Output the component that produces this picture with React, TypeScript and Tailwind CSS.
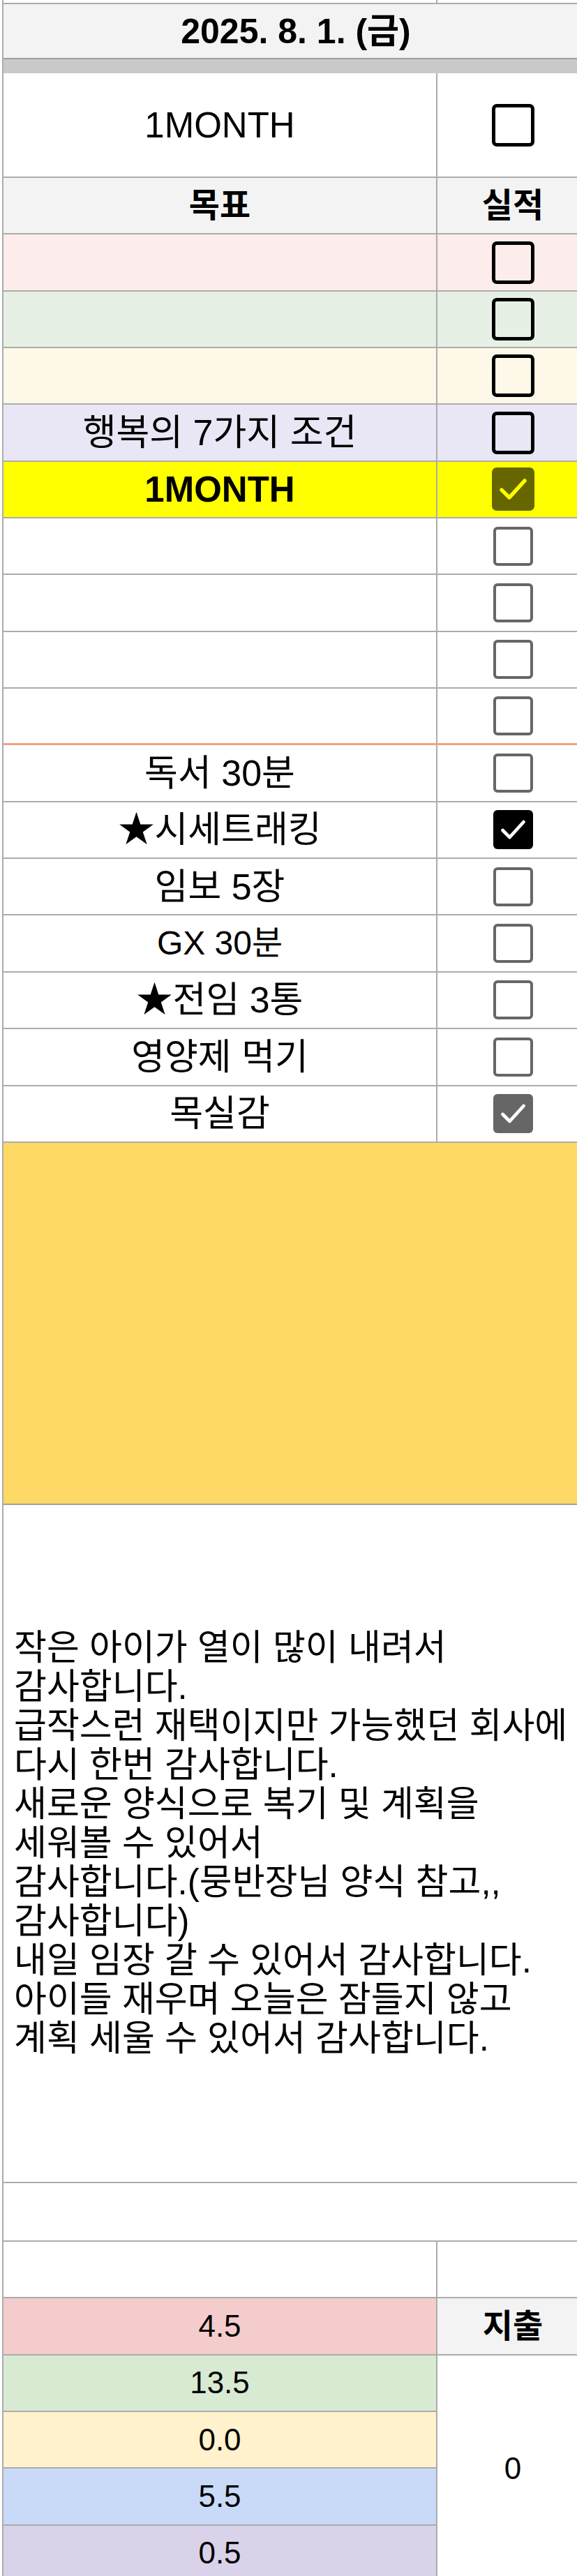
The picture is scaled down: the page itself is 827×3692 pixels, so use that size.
import React from "react";

type BoxKind = "black" | "gray" | "yellowChecked" | "blackChecked" | "grayChecked";

function Check({ color }: { color: string }) {
  return (
    <svg viewBox="0 0 24 24" className="w-full h-full" fill="none">
      <polyline
        points="4.5,12.5 9.5,17.5 19.5,6.5"
        stroke={color}
        strokeWidth="2.4"
        strokeLinecap="round"
        strokeLinejoin="round"
      />
    </svg>
  );
}

function Box({ kind }: { kind: BoxKind }) {
  if (kind === "black") {
    return <div className="w-[61px] h-[61px] border-[5px] border-black rounded-[7px] bg-transparent" />;
  }
  if (kind === "gray") {
    return <div className="w-[57px] h-[56px] border-[4px] border-[#666666] rounded-[6px] bg-transparent" />;
  }
  if (kind === "yellowChecked") {
    return (
      <div className="w-[61px] h-[62px] rounded-[7px] bg-[#666600] p-[4px]">
        <Check color="#ffff00" />
      </div>
    );
  }
  if (kind === "blackChecked") {
    return (
      <div className="w-[57px] h-[56px] rounded-[6px] bg-black p-[4px]">
        <Check color="#ffffff" />
      </div>
    );
  }
  return (
    <div className="w-[57px] h-[56px] rounded-[6px] bg-[#666666] p-[4px]">
      <Check color="#ffffff" />
    </div>
  );
}

function Row({
  bg,
  label,
  labelClass,
  box,
  border,
}: {
  bg: string;
  label?: React.ReactNode;
  labelClass?: string;
  box?: BoxKind;
  border?: string;
}) {
  return (
    <div className={`flex h-[81.35px] ${border ?? "border-b-2 border-[#acacac]"} ${bg}`}>
      <div className={`w-[620px] flex items-center justify-center whitespace-nowrap leading-none ${labelClass ?? "text-[52px]"}`}>
        {label}
      </div>
      <div className="w-[218px] border-l-2 border-[#acacac] flex items-center justify-center">
        {box ? <Box kind={box} /> : null}
      </div>
    </div>
  );
}

const gratitude = [
  "작은 아이가 열이 많이 내려서",
  "감사합니다.",
  "급작스런 재택이지만 가능했던 회사에",
  "다시 한번 감사합니다.",
  "새로운 양식으로 복기 및 계획을",
  "세워볼 수 있어서",
  "감사합니다.(뭉반장님 양식 참고,,",
  "감사합니다)",
  "내일 임장 갈 수 있어서 감사합니다.",
  "아이들 재우며 오늘은 잠들지 않고",
  "계획 세울 수 있어서 감사합니다.",
];

export default function App() {
  return (
    <div className="w-[827px] h-[3692px] overflow-hidden bg-white text-black [font-family:'Liberation_Sans','Noto_Sans_CJK_KR',sans-serif]">
      <div className="ml-[3px] w-[840px] border-l-2 border-[#acacac]">
        {/* sliver of previous row */}
        <div className="flex h-[6px] border-b-2 border-[#acacac]">
          <div className="w-[620px]" />
          <div className="w-[218px] border-l-2 border-[#acacac]" />
        </div>

        {/* date header */}
        <div className="h-[79px] border-b-2 border-[#9f9f9f] bg-[#f3f3f3] flex items-center justify-center">
          <span className="text-[50px] font-bold leading-none whitespace-nowrap">2025. 8. 1. (금)</span>
        </div>

        {/* frozen divider band */}
        <div className="h-[20px] bg-[#c9c9c9]" />

        {/* 1MONTH row */}
        <div className="flex h-[150px] border-b-2 border-[#acacac] bg-white">
          <div className="w-[620px] flex items-center justify-center text-[51px] leading-none">1MONTH</div>
          <div className="w-[218px] border-l-2 border-[#acacac] flex items-center justify-center">
            <Box kind="black" />
          </div>
        </div>

        {/* header */}
        <div className="flex h-[81.35px] border-b-2 border-[#acacac] bg-[#f3f3f3]">
          <div className="w-[620px] flex items-center justify-center text-[48px] font-bold leading-none">목표</div>
          <div className="w-[218px] border-l-2 border-[#acacac] flex items-center justify-center text-[48px] font-bold leading-none">
            실적
          </div>
        </div>

        <Row bg="bg-[#fdecec]" box="black" />
        <Row bg="bg-[#e7f0e4]" box="black" />
        <Row bg="bg-[#fef8e9]" box="black" />
        <Row bg="bg-[#e9e7f6]" label="행복의 7가지 조건" box="black" />
        <Row bg="bg-[#ffff00]" label="1MONTH" labelClass="text-[51px] font-bold" box="yellowChecked" />
        <Row bg="bg-white" box="gray" />
        <Row bg="bg-white" box="gray" />
        <Row bg="bg-white" box="gray" />
        <Row bg="bg-white" box="gray" border="border-b-[3px] border-[#f2a27e]" />
        <Row bg="bg-white" label="독서 30분" box="gray" />
        <Row bg="bg-white" label="★시세트래킹" box="blackChecked" />
        <Row bg="bg-white" label="임보 5장" box="gray" />
        <Row bg="bg-white" label="GX 30분" labelClass="text-[48px]" box="gray" />
        <Row bg="bg-white" label="★전임 3통" box="gray" />
        <Row bg="bg-white" label="영양제 먹기" box="gray" />
        <Row bg="bg-white" label="목실감" box="grayChecked" />

        {/* yellow merged block */}
        <div className="h-[519px] bg-[#ffd966] border-b-2 border-[#9f9f9f]" />

        {/* gratitude text block */}
        <div className="h-[972px] border-b-2 border-[#acacac] flex flex-col justify-center pl-[15px]">
          {gratitude.map((line, i) => (
            <div key={i} className="text-[51px] leading-[56px] whitespace-nowrap">
              {line}
            </div>
          ))}
        </div>

        {/* empty merged row */}
        <div className="h-[84px] border-b-2 border-[#acacac]" />

        {/* empty two-col row */}
        <div className="flex h-[81.35px] border-b-2 border-[#acacac]">
          <div className="w-[620px]" />
          <div className="w-[218px] border-l-2 border-[#acacac]" />
        </div>

        {/* bottom summary */}
        <div className="flex">
          <div className="w-[620px] flex flex-col">
            <div className="h-[81.35px] border-b-2 border-[#acacac] bg-[#f4cccc] flex items-center justify-center text-[44px] leading-none">4.5</div>
            <div className="h-[81.35px] border-b-2 border-[#acacac] bg-[#d9ead3] flex items-center justify-center text-[44px] leading-none">13.5</div>
            <div className="h-[81.35px] border-b-2 border-[#acacac] bg-[#fff2cc] flex items-center justify-center text-[44px] leading-none">0.0</div>
            <div className="h-[81.35px] border-b-2 border-[#acacac] bg-[#c9daf8] flex items-center justify-center text-[44px] leading-none">5.5</div>
            <div className="h-[81.35px] border-b-2 border-[#acacac] bg-[#d9d2e9] flex items-center justify-center text-[44px] leading-none">0.5</div>
          </div>
          <div className="w-[218px] border-l-2 border-[#acacac] flex flex-col">
            <div className="h-[81.35px] border-b-2 border-[#acacac] bg-[#f3f3f3] flex items-center justify-center text-[47px] font-bold leading-none">
              지출
            </div>
            <div className="flex-1 flex items-center justify-center text-[44px] leading-none">0</div>
          </div>
        </div>
      </div>
    </div>
  );
}
